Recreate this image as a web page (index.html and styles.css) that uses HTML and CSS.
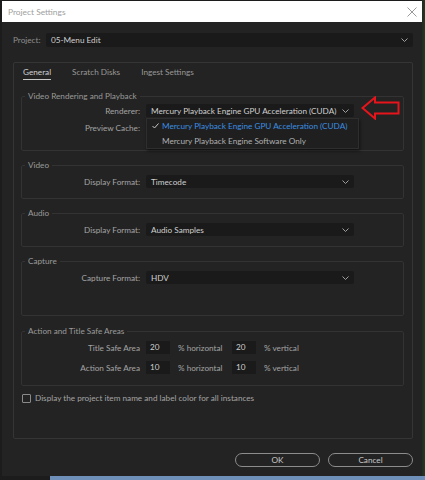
FILE: index.html
```html
<!DOCTYPE html>
<html>
<head>
<meta charset="utf-8">
<link rel="stylesheet" href="styles.css">
</head>
<body>
<div class="desktop">
  <div class="window">
    <div class="titlebar">
      <span class="title">Project Settings</span>
      <svg class="close" width="10" height="10" viewBox="0 0 10 10"><path d="M0.5 0.5 L9.5 9.5 M9.5 0.5 L0.5 9.5" stroke="#9a9a9a" stroke-width="1"/></svg>
    </div>
    <div class="body">
      <div class="project-row">
        <span class="plabel">Project:</span>
        <div class="select wide"><span>05-Menu Edit</span><svg class="chev" width="7" height="4" viewBox="0 0 7 4"><path d="M0.5 0.5 L3.5 3.5 L6.5 0.5" fill="none" stroke="#a0a0a0" stroke-width="1"/></svg></div>
      </div>
      <div class="panel">
        <div class="tabs">
          <span class="tab active">General</span>
          <span class="tab">Scratch Disks</span>
          <span class="tab">Ingest Settings</span>
        </div>
        <fieldset class="group g1">
          <legend>Video Rendering and Playback</legend>
          <div class="row">
            <span class="label">Renderer:</span>
            <div class="select-wrap">
              <div class="select"><span>Mercury Playback Engine GPU Acceleration (CUDA)</span><svg class="chev" width="7" height="4" viewBox="0 0 7 4"><path d="M0.5 0.5 L3.5 3.5 L6.5 0.5" fill="none" stroke="#a0a0a0" stroke-width="1"/></svg></div>
              <div class="menu">
                <div class="item selected"><svg class="check" width="7" height="6" viewBox="0 0 7 6"><path d="M0.5 3 L2.5 5 L6.5 0.5" fill="none" stroke="#c8c8c8" stroke-width="1"/></svg>Mercury Playback Engine GPU Acceleration (CUDA)</div>
                <div class="item">Mercury Playback Engine Software Only</div>
              </div>
              <svg class="arrow" width="40" height="24" viewBox="0 0 40 24"><path d="M1.5 12 L14 1.5 L14 6.5 L37.5 6.5 L37.5 17.5 L14 17.5 L14 22.5 Z" fill="none" stroke="#e8141b" stroke-width="2" stroke-linejoin="miter"/></svg>
            </div>
          </div>
          <div class="row">
            <span class="label">Preview Cache:</span>
            <span></span>
          </div>
        </fieldset>
        <fieldset class="group g2">
          <legend>Video</legend>
          <div class="row">
            <span class="label">Display Format:</span>
            <div class="select"><span>Timecode</span><svg class="chev" width="7" height="4" viewBox="0 0 7 4"><path d="M0.5 0.5 L3.5 3.5 L6.5 0.5" fill="none" stroke="#a0a0a0" stroke-width="1"/></svg></div>
          </div>
        </fieldset>
        <fieldset class="group g2">
          <legend>Audio</legend>
          <div class="row">
            <span class="label">Display Format:</span>
            <div class="select"><span>Audio Samples</span><svg class="chev" width="7" height="4" viewBox="0 0 7 4"><path d="M0.5 0.5 L3.5 3.5 L6.5 0.5" fill="none" stroke="#a0a0a0" stroke-width="1"/></svg></div>
          </div>
        </fieldset>
        <fieldset class="group g4">
          <legend>Capture</legend>
          <div class="row">
            <span class="label">Capture Format:</span>
            <div class="select"><span>HDV</span><svg class="chev" width="7" height="4" viewBox="0 0 7 4"><path d="M0.5 0.5 L3.5 3.5 L6.5 0.5" fill="none" stroke="#a0a0a0" stroke-width="1"/></svg></div>
          </div>
        </fieldset>
        <fieldset class="group g5">
          <legend>Action and Title Safe Areas</legend>
          <div class="row safe">
            <span class="label">Title Safe Area</span>
            <div class="fields">
              <span class="num">20</span><span class="unit h">% horizontal</span>
              <span class="num">20</span><span class="unit">% vertical</span>
            </div>
          </div>
          <div class="row safe">
            <span class="label">Action Safe Area</span>
            <div class="fields">
              <span class="num">10</span><span class="unit h">% horizontal</span>
              <span class="num">10</span><span class="unit">% vertical</span>
            </div>
          </div>
        </fieldset>
        <div class="checkrow">
          <span class="checkbox"></span>
          <span class="checktext">Display the project item name and label color for all instances</span>
        </div>
      </div>
      <div class="buttons">
        <span class="btn">OK</span>
        <span class="btn">Cancel</span>
      </div>
    </div>
  </div>
  <div class="taskbar"></div>
</div>
</body>
</html>
```

FILE: styles.css
```css
* { box-sizing: border-box; }
html, body { margin: 0; padding: 0; }
body {
  background: #1a1f1a;
  font-family: Lato, "Open Sans", sans-serif;
  font-size: 8.2px;
  color: #9c9c9c;
  width: 425px;
  height: 480px;
  overflow: hidden;
}
.desktop {
  width: 425px;
  height: 480px;
  padding-top: 1px;
  background: linear-gradient(90deg, #1c1c1c 0, #1c1c1c 421px, #1f2e1f 422px, #263826 425px);
}
.window {
  margin-left: 2px;
  width: 420px;
  height: 475px;
  background: #232323;
  display: flex;
  flex-direction: column;
}
.titlebar {
  height: 21px;
  background: #ffffff;
  display: flex;
  align-items: center;
  justify-content: space-between;
  padding: 0 5px 0 6px;
}
.title {
  color: #a0a0a0;
  font-size: 8.4px;
}
.close { display: block; }
.body {
  flex: 1;
  padding: 11px 9px 0 11px;
  display: flex;
  flex-direction: column;
}
.project-row {
  display: flex;
  align-items: center;
  height: 14px;
}
.plabel {
  width: 33px;
  color: #8e8e8e;
}
.select {
  height: 13px;
  background: #1a1a1a;
  border-radius: 2px;
  display: flex;
  align-items: center;
  justify-content: space-between;
  padding: 0 5px 0 5px;
  color: #cfcfcf;
  white-space: nowrap;
}
.select.wide {
  flex: 1;
  height: 14px;
}
.chev { display: block; flex: none; }
.panel {
  margin-top: 15px;
  border: 1px solid #353535;
  border-radius: 2px;
  height: 377px;
  padding: 0 8px 0 7px;
}
.tabs {
  display: flex;
  gap: 21px;
  padding: 4px 0 0 2px;
  height: 27px;
}
.tab {
  height: 13px;
  line-height: 11px;
  color: #989898;
}
.tab.active {
  color: #d0d0d0;
  border-bottom: 1px solid #c8c8c8;
}
.group {
  margin: 0;
  border: 1px solid #333333;
  border-radius: 2px;
  padding: 0;
  min-width: 0;
}
.group legend {
  padding: 0 3px;
  margin-left: 3px;
  line-height: 12px;
  color: #9a9a9a;
}
.g1 { height: 61px; }
.g2 { height: 40px; margin-top: 8px; }
.g4 { height: 61px; margin-top: 8px; }
.g5 { height: 61px; margin-top: 9px; }
.g1 .row:first-of-type { margin-top: 2px; }
.row {
  display: grid;
  grid-template-columns: 118px 208px;
  column-gap: 6px;
  align-items: center;
  height: 13px;
}
.g1 .row + .row { margin-top: 4px; }
.g2 .row, .g4 .row { margin-top: 4px; }
.g5 .row { margin-top: 4px; }
.g5 .row + .row { margin-top: 7px; }
.label {
  text-align: right;
  color: #a3a3a3;
  white-space: nowrap;
}
.select-wrap { position: relative; }
.menu {
  position: absolute;
  left: 0;
  top: 14px;
  width: 213px;
  height: 31px;
  background: #1f1f1f;
  border: 1px solid #2e2e2e;
  box-shadow: 1px 2px 3px rgba(0,0,0,0.5);
  z-index: 2;
  padding-top: 0;
}
.item {
  height: 15px;
  line-height: 14px;
  padding-left: 15px;
  color: #b0b0b0;
  position: relative;
  white-space: nowrap;
}
.item.selected { color: #3b8ee0; }
.check {
  position: absolute;
  left: 5px;
  top: 4px;
}
.arrow {
  position: absolute;
  left: 215px;
  top: -8px;
}
.fields {
  display: flex;
  align-items: center;
  height: 13px;
}
.num {
  width: 24px;
  height: 13px;
  line-height: 13px;
  background: #1a1a1a;
  color: #cfcfcf;
  padding-left: 4px;
}
.unit {
  color: #a3a3a3;
  margin-left: 8px;
  white-space: nowrap;
}
.unit.h { width: 54px; }
.checkrow {
  display: flex;
  align-items: center;
  margin-top: 7px;
  height: 10px;
}
.checkbox {
  width: 9px;
  height: 9px;
  border: 1px solid #8a8a8a;
  border-radius: 1px;
  margin-left: 1px;
}
.checktext {
  margin-left: 4px;
  color: #a3a3a3;
  white-space: nowrap;
}
.buttons {
  display: flex;
  justify-content: flex-end;
  gap: 8px;
  margin-top: 14px;
}
.btn {
  width: 85px;
  height: 14px;
  border: 1px solid #8c8c8c;
  border-radius: 7px;
  text-align: center;
  line-height: 12px;
  color: #c8c8c8;
}
.taskbar {
  margin-left: 50px;
  height: 4px;
  background: #6d8fb8;
}
```
